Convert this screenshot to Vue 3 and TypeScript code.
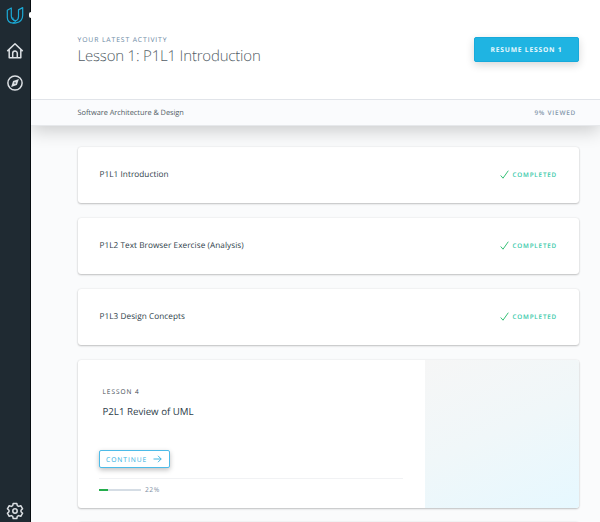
<script setup lang="ts">
interface Lesson {
  title: string
  status: string
}

const lessons: Lesson[] = [
  { title: 'P1L1 Introduction', status: 'COMPLETED' },
  { title: 'P1L2 Text Browser Exercise (Analysis)', status: 'COMPLETED' },
  { title: 'P1L3 Design Concepts', status: 'COMPLETED' },
]

const progress = 22
</script>

<template>
  <div class="app">
    <nav class="sidebar">
      <svg class="logo" viewBox="0 0 18 19" width="18" height="19">
        <path d="M1.300 4.200 5.300 2V9.800c0 3 1.600 4.600 4.600 4.900-.8 1.500-1.900 2.300-3.400 2.300-3 0-5.200-2.200-5.200-5.400Z" />
        <path d="M6.500 17c1.200.3 2.300.2 3.500-.1 4-.9 6.700-3.800 6.700-7.700V1.600L12.500 3.900V10.500c0 2.200-.9 3.600-2.600 4.200-2-.2-3.200-1.400-3.200-3.300" />
      </svg>
      <svg class="icon home" viewBox="0 0 18 18" width="18" height="18">
        <path d="M1.300 9.100 9 1.800l7.700 7.300M3.200 7.800v7.900h11.600V7.800M6.700 15.500V11.300a2.300 2.300 0 0 1 4.600 0v4.200" />
      </svg>
      <svg class="icon compass" viewBox="0 0 18 18" width="18" height="18">
        <circle cx="9" cy="9" r="7.100" />
        <path class="needle" d="m12.900 5.100-2 5.800-5.800 2 2-5.800Z" />
        <circle class="hub" cx="9" cy="9" r=".8" />
      </svg>
      <svg class="icon gear" viewBox="0 0 18 18" width="18" height="18">
        <path d="M7.200 1.500h3.600l.5 2.200 1.300.7 2.200-.7 1.800 3.100-1.600 1.500v1.400l1.600 1.500-1.800 3.100-2.200-.7-1.300.7-.5 2.200H7.200l-.5-2.200-1.300-.7-2.200.7-1.800-3.100L3 9.700V8.300L1.400 6.800l1.800-3.100 2.200.7 1.300-.7Z" />
        <circle cx="9" cy="9" r="2.200" />
      </svg>
      <span class="marker"></span>
    </nav>

    <div class="page">
      <header class="hero">
        <div>
          <div class="eyebrow">YOUR LATEST ACTIVITY</div>
          <h1>Lesson 1: P1L1 Introduction</h1>
        </div>
        <button class="resume">RESUME LESSON 1</button>
      </header>
      <div class="subbar">
        <span class="course">Software Architecture &amp; Design</span>
        <span class="viewed">9% VIEWED</span>
      </div>

      <main class="list">
        <article v-for="lesson in lessons" :key="lesson.title" class="card row">
          <h2>{{ lesson.title }}</h2>
          <div class="status">
            <svg viewBox="0 0 9 9" width="9" height="9"><path d="M.7 5.500 3 8.200 8.300.7" /></svg>
            <span>{{ lesson.status }}</span>
          </div>
        </article>

        <article class="card current">
          <div class="body">
            <div class="number">LESSON 4</div>
            <h2>P2L1 Review of UML</h2>
            <button class="continue">
              <span>CONTINUE</span>
              <svg viewBox="0 0 9 8" width="9" height="8"><path d="M.5 4h7.700M5 .8 8.200 4 5 7.200" /></svg>
            </button>
            <div class="progress">
              <div class="track"><div class="fill" :style="{ width: progress + '%' }"></div></div>
              <span>{{ progress }}%</span>
            </div>
          </div>
          <div class="art"></div>
        </article>

        <article class="card next"></article>
      </main>
    </div>
  </div>
</template>

<style>
body {
  margin: 0;
  overflow: hidden;
}
</style>

<style scoped>
.app {
  display: flex;
  width: 600px;
  height: 522px;
  overflow: hidden;
  background: #fafbfc;
  font-family: "Open Sans", "Noto Sans", sans-serif;
  text-rendering: geometricPrecision;
}
.app * {
  box-sizing: border-box;
}
h1, h2 {
  margin: 0;
  font-weight: 400;
}
button {
  font-family: inherit;
  padding: 0;
  text-rendering: inherit;
}
svg {
  display: block;
  fill: none;
}

.sidebar {
  position: relative;
  z-index: 3;
  flex: none;
  display: flex;
  flex-direction: column;
  width: 31px;
  padding: 6px 0 2px 5.500px;
  background: #1f2a32;
  border-right: 1px solid #080d11;
}
.logo {
  stroke: #1ba9d5;
  stroke-width: 1.2;
  stroke-linejoin: round;
}
.icon {
  stroke: #dce0e4;
  stroke-width: 1.5;
  stroke-linejoin: round;
}
.home {
  margin-top: 17px;
}
.compass {
  margin-top: 13.500px;
}
.needle {
  fill: #dce0e4;
  stroke: none;
}
.hub {
  fill: #1f2a32;
  stroke: none;
}
.gear {
  margin-top: auto;
}
.marker {
  position: absolute;
  top: 12px;
  right: -1px;
  width: 2px;
  height: 6px;
  border-radius: 2px 0 0 2px;
  background: #fff;
}

.page {
  flex: 1;
  display: flex;
  flex-direction: column;
}
.hero {
  position: relative;
  z-index: 2;
  flex: none;
  display: flex;
  justify-content: space-between;
  height: 99px;
  padding: 34px 21px 0 46.500px;
  background: #fff;
}
.eyebrow {
  padding-top: 1px;
  font-size: 6.800px;
  line-height: 10px;
  letter-spacing: 0.880px;
  color: #6a88a3;
}
h1 {
  margin-top: 1px;
  font-size: 15px;
  line-height: 20px;
  font-weight: 300;
  letter-spacing: -0.190px;
  color: #525c65;
}
.resume {
  width: 105px;
  height: 25px;
  margin-top: 3px;
  border: 1px solid #17aadb;
  border-radius: 2px;
  background: #1fb4e2;
  box-shadow: 0 3px 8px rgba(0, 0, 0, 0.16);
  color: #e8f8fd;
  font-size: 6.700px;
  font-weight: 700;
  letter-spacing: 0.800px;
}
.subbar {
  position: relative;
  flex: none;
  display: flex;
  justify-content: space-between;
  align-items: center;
  height: 27px;
  padding: 0 24px 0 46.500px;
  background: #fafbfd;
  border-top: 1px solid #e1e4e9;
  border-bottom: 1px solid #e6e8eb;
  box-shadow: 0 5px 18px rgba(0, 0, 0, 0.19);
}
.course {
  font-size: 7.400px;
  letter-spacing: -0.040px;
  color: #525c65;
}
.viewed {
  font-size: 6.400px;
  font-weight: 600;
  letter-spacing: 0.770px;
  color: #8497ab;
}

.list {
  display: flex;
  flex-direction: column;
  gap: 15px;
  padding: 21px 21.500px 0 46.500px;
}
.card {
  flex: none;
  background: #fff;
  border-radius: 3px;
  box-shadow: 0 1px 2px rgba(0, 0, 0, 0.22), 0 0 2px rgba(0, 0, 0, 0.1);
}
.row {
  display: flex;
  justify-content: space-between;
  align-items: center;
  height: 56px;
  padding: 0 21.500px 1px 22px;
}
.row h2 {
  font-size: 8.200px;
  letter-spacing: 0.060px;
  color: #2e3d49;
}
.status {
  display: flex;
  align-items: center;
  gap: 4px;
  color: #35c8a8;
  font-size: 6.300px;
  font-weight: 600;
  letter-spacing: 0.800px;
}
.status svg {
  stroke: #20b968;
  stroke-width: 0.900;
}
.current {
  display: flex;
  height: 148px;
  overflow: hidden;
}
.body {
  width: 347px;
  padding: 26px 22px 0 21.500px;
}
.number {
  padding: 1px 0 0 3.500px;
  font-size: 6.500px;
  line-height: 10px;
  letter-spacing: 0.950px;
  color: #3f4a54;
}
.body h2 {
  margin-top: 7px;
  padding-left: 3.500px;
  font-size: 9.700px;
  line-height: 15px;
  color: #2e3d49;
}
.continue {
  display: flex;
  align-items: center;
  justify-content: space-between;
  width: 71px;
  height: 18px;
  margin-top: 31px;
  padding: 0 7px 0 6px;
  border: 1px solid #4dbbe8;
  border-radius: 2px;
  background: #fff;
  box-shadow: 0 2px 5px rgba(0, 0, 0, 0.25);
  color: #2fb0df;
  font-size: 6.700px;
  letter-spacing: 0.950px;
}
.continue svg {
  stroke: #2fb0df;
  stroke-width: 0.900;
}
.progress {
  display: flex;
  align-items: center;
  gap: 4px;
  height: 22px;
  margin-top: 10px;
  border-top: 1px solid #f1f2f4;
  color: #7d8fa3;
  font-size: 6.700px;
  letter-spacing: 0.500px;
}
.track {
  width: 42px;
  height: 2px;
  background: #d5dde5;
}
.fill {
  height: 100%;
  background: #24ad4c;
}
.art {
  flex: 1;
  background: linear-gradient(155deg, #f6f6f6, #f0f7f9 48%, #e6f8ff);
}
.next {
  height: 56px;
  margin-top: -1px;
}
</style>
